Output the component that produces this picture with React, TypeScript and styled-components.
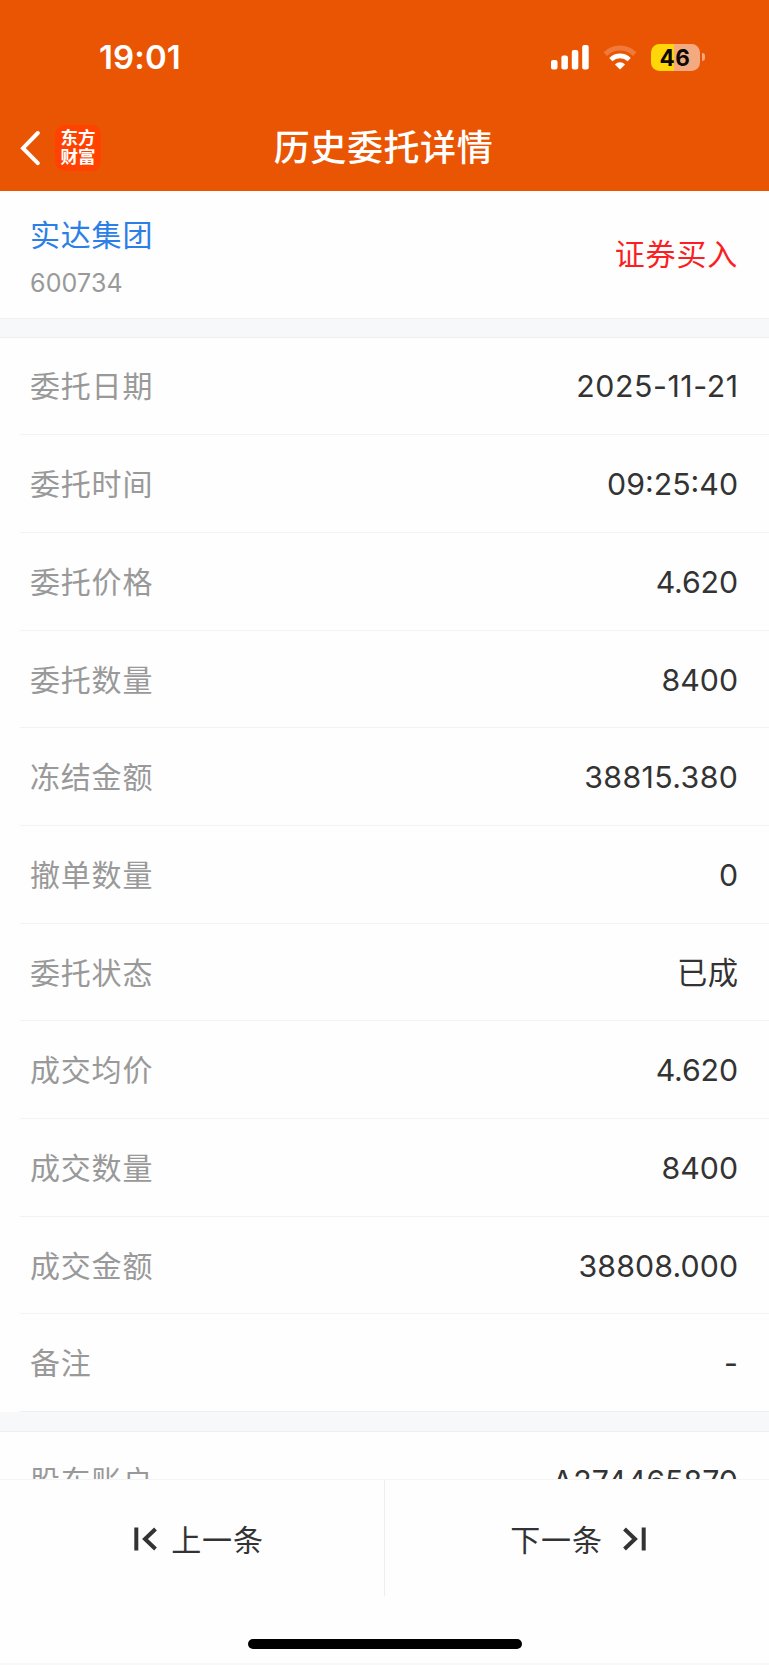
import React from "react";
import styled, { createGlobalStyle } from "styled-components";

const GlobalStyle = createGlobalStyle`
  * { box-sizing: border-box; }
  body {
    margin: 0;
    background: #fff;
    font-family: Inter, "Noto Sans CJK SC", sans-serif;
    color: #333;
  }
`;

const Screen = styled.div`
  display: flex;
  flex-direction: column;
  width: 769px;
  height: 1665px;
  overflow: hidden;
  background: #fefefe;
`;

const Header = styled.header`
  flex: none;
  height: 191px;
  background: #ea5504;
  color: #fff;
`;

const StatusBar = styled.div`
  display: flex;
  align-items: center;
  justify-content: space-between;
  height: 114px;
  padding: 0 64px 0 99px;
`;

const Clock = styled.span`
  font-size: 33px;
  font-weight: 600;
  line-height: 40px;
  letter-spacing: 0.1px;
`;

const StatusIcons = styled.div`
  display: flex;
  align-items: center;
`;

const WifiIcon = styled.svg`
  margin: 0 14px;
`;

const Battery = styled.div`
  display: flex;
  align-items: center;
  justify-content: center;
  width: 49px;
  height: 27px;
  padding-right: 1px;
  border-radius: 8.5px;
  background: linear-gradient(90deg, #ffd60a 47%, #f4aa81 47%);
  color: #0a0a00;
  font-size: 22.5px;
  font-weight: 700;
  line-height: 27px;
  letter-spacing: 0.5px;
`;

const BatteryTip = styled.div`
  width: 3px;
  height: 8px;
  margin-left: 2px;
  border-radius: 0 3px 3px 0;
  background: #f4aa81;
`;

const NavBar = styled.nav`
  display: grid;
  grid-template-columns: 1fr auto 1fr;
  align-items: center;
  height: 68px;
  padding: 0 21px 0 19px;
`;

const NavLeft = styled.div`
  display: flex;
  align-items: center;
  gap: 15px;
`;

const BrandLogo = styled.div`
  display: flex;
  flex-direction: column;
  align-items: center;
  justify-content: center;
  width: 46px;
  height: 46px;
  padding-bottom: 2px;
  border-radius: 9px;
  background: #ff4200;
  font-size: 17.5px;
  font-weight: 700;
  line-height: 19px;
`;

const Title = styled.h1`
  margin: 0;
  padding-bottom: 1px;
  font-size: 36px;
  font-weight: 500;
  line-height: 50px;
  letter-spacing: 0.6px;
`;

const Content = styled.main`
  flex: 1;
  min-height: 0;
  overflow: hidden;
`;

const Summary = styled.section`
  display: flex;
  align-items: center;
  justify-content: space-between;
  height: 127px;
  padding: 0 31px 0 30px;
`;

const Stock = styled.div`
  padding-top: 5px;
`;

const StockName = styled.div`
  color: #2d7fe8;
  font-size: 30px;
  line-height: 44px;
  letter-spacing: 0.8px;
`;

const StockCode = styled.div`
  margin-top: 7px;
  color: #999;
  font-size: 25px;
  line-height: 38px;
  letter-spacing: 0.15px;
`;

const Direction = styled.div`
  padding-bottom: 6px;
  color: #fa1f23;
  font-size: 30px;
  letter-spacing: 0.8px;
`;

const SectionGap = styled.div<{ $topLine?: boolean }>`
  height: 19.6px;
  border-top: ${(p) => (p.$topLine ? "1px solid #eff0f2" : "0")};
  border-bottom: 1px solid #eeeff1;
  background: #f7f8fa;
`;

const Row = styled.div<{ $last?: boolean }>`
  display: flex;
  align-items: center;
  justify-content: space-between;
  height: 97.7px;
  margin-left: 20px;
  padding: 0 31px 0 10px;
  border-bottom: 1px solid ${(p) => (p.$last ? "#eeeff1" : "#f3f3f4")};
`;

const Label = styled.span`
  padding-top: 1px;
  color: #999;
  font-size: 30px;
  line-height: 44px;
  letter-spacing: 0.8px;
`;

const Value = styled.span<{ $tracking: number }>`
  margin-right: ${(p) => -p.$tracking}px;
  padding-top: 1px;
  color: #333;
  font-size: 30.3px;
  line-height: 44px;
  letter-spacing: ${(p) => p.$tracking}px;
`;

const Footer = styled.footer`
  flex: none;
  height: 186px;
  border-top: 1px solid #f4f4f5;
  border-bottom: 2px solid #f8f8f8;
`;

const Pager = styled.div`
  display: grid;
  grid-template-columns: 385px 1fr;
  height: 116px;
`;

const PagerButton = styled.button<{ $divided?: boolean; $gap: number }>`
  display: flex;
  align-items: center;
  justify-content: center;
  gap: ${(p) => p.$gap}px;
  padding: 2px 0 0 ${(p) => (p.$divided ? 14 : 2)}px;
  border: 0;
  border-right: ${(p) => (p.$divided ? "1px solid #eeeeef" : "0")};
  background: none;
  color: #333;
  font-family: inherit;
  font-size: 30px;
  line-height: 44px;
  letter-spacing: 0.8px;
`;

const PagerText = styled.span`
  padding-top: 1px;
`;

const HomeIndicator = styled.div`
  width: 274px;
  height: 10px;
  margin: 43px auto 0;
  border-radius: 5px;
  background: #000;
`;

const rows: { label: string; value: string; tracking?: number }[] = [
  { label: "委托日期", value: "2025-11-21", tracking: 0.55 },
  { label: "委托时间", value: "09:25:40" },
  { label: "委托价格", value: "4.620", tracking: -0.15 },
  { label: "委托数量", value: "8400" },
  { label: "冻结金额", value: "38815.380", tracking: 0.4 },
  { label: "撤单数量", value: "0" },
  { label: "委托状态", value: "已成", tracking: 0.5 },
  { label: "成交均价", value: "4.620", tracking: -0.15 },
  { label: "成交数量", value: "8400" },
  { label: "成交金额", value: "38808.000", tracking: 0.1 },
  { label: "备注", value: "-" },
];

interface DetailRowProps {
  label: string;
  value: string;
  tracking?: number;
  last?: boolean;
}

function DetailRow({ label, value, tracking = 0, last }: DetailRowProps) {
  return (
    <Row $last={last}>
      <Label>{label}</Label>
      <Value $tracking={tracking}>{value}</Value>
    </Row>
  );
}

export default function App() {
  return (
    <Screen>
      <GlobalStyle />
      <Header>
        <StatusBar>
          <Clock>19:01</Clock>
          <StatusIcons>
            <svg width="38" height="25" viewBox="0 0 38 25" fill="#fff">
              <rect x="0" y="15" width="6.5" height="9.5" rx="2" />
              <rect x="10.4" y="10.5" width="6.5" height="14" rx="2" />
              <rect x="20.8" y="5" width="6.5" height="19.5" rx="2" />
              <rect x="31.2" y="0" width="6.5" height="24.5" rx="2" />
            </svg>
            <WifiIcon width="34" height="25" viewBox="0 0 34 25" fill="none">
              <path d="M2.3 9.1A21 21 0 0 1 31.7 9.1" stroke="#f07a3c" strokeWidth="5" />
              <path d="M7.8 14.6A13.2 13.2 0 0 1 26.2 14.6" stroke="#fff" strokeWidth="4.6" />
              <path d="M17 24.5L11.9 19.4A7.2 7.2 0 0 1 22.1 19.4Z" fill="#fff" />
            </WifiIcon>
            <Battery>46</Battery>
            <BatteryTip />
          </StatusIcons>
        </StatusBar>
        <NavBar>
          <NavLeft>
            <svg width="21" height="36" viewBox="0 0 21 36" fill="none">
              <path d="M18.8 3L4 18.2L18.8 33.2" stroke="#fff" strokeWidth="4" strokeLinecap="round" />
            </svg>
            <BrandLogo>
              <span>东方</span>
              <span>财富</span>
            </BrandLogo>
          </NavLeft>
          <Title>历史委托详情</Title>
        </NavBar>
      </Header>
      <Content>
        <Summary>
          <Stock>
            <StockName>实达集团</StockName>
            <StockCode>600734</StockCode>
          </Stock>
          <Direction>证券买入</Direction>
        </Summary>
        <SectionGap $topLine />
        {rows.map((row, i) => (
          <DetailRow key={row.label} {...row} last={i === rows.length - 1} />
        ))}
        <SectionGap />
        <DetailRow label="股东账户" value="A274465870" />
      </Content>
      <Footer>
        <Pager>
          <PagerButton $divided $gap={14}>
            <svg width="23" height="24" viewBox="0 0 23 24" fill="none" stroke="#333" strokeWidth="4">
              <path d="M2.3 0.5V23.5" />
              <path d="M21.5 2L11 12L21.5 22" />
            </svg>
            <PagerText>上一条</PagerText>
          </PagerButton>
          <PagerButton $gap={20}>
            <PagerText>下一条</PagerText>
            <svg width="23" height="24" viewBox="0 0 23 24" fill="none" stroke="#333" strokeWidth="4">
              <path d="M20.7 0.5V23.5" />
              <path d="M1.5 2L12 12L1.5 22" />
            </svg>
          </PagerButton>
        </Pager>
        <HomeIndicator />
      </Footer>
    </Screen>
  );
}
